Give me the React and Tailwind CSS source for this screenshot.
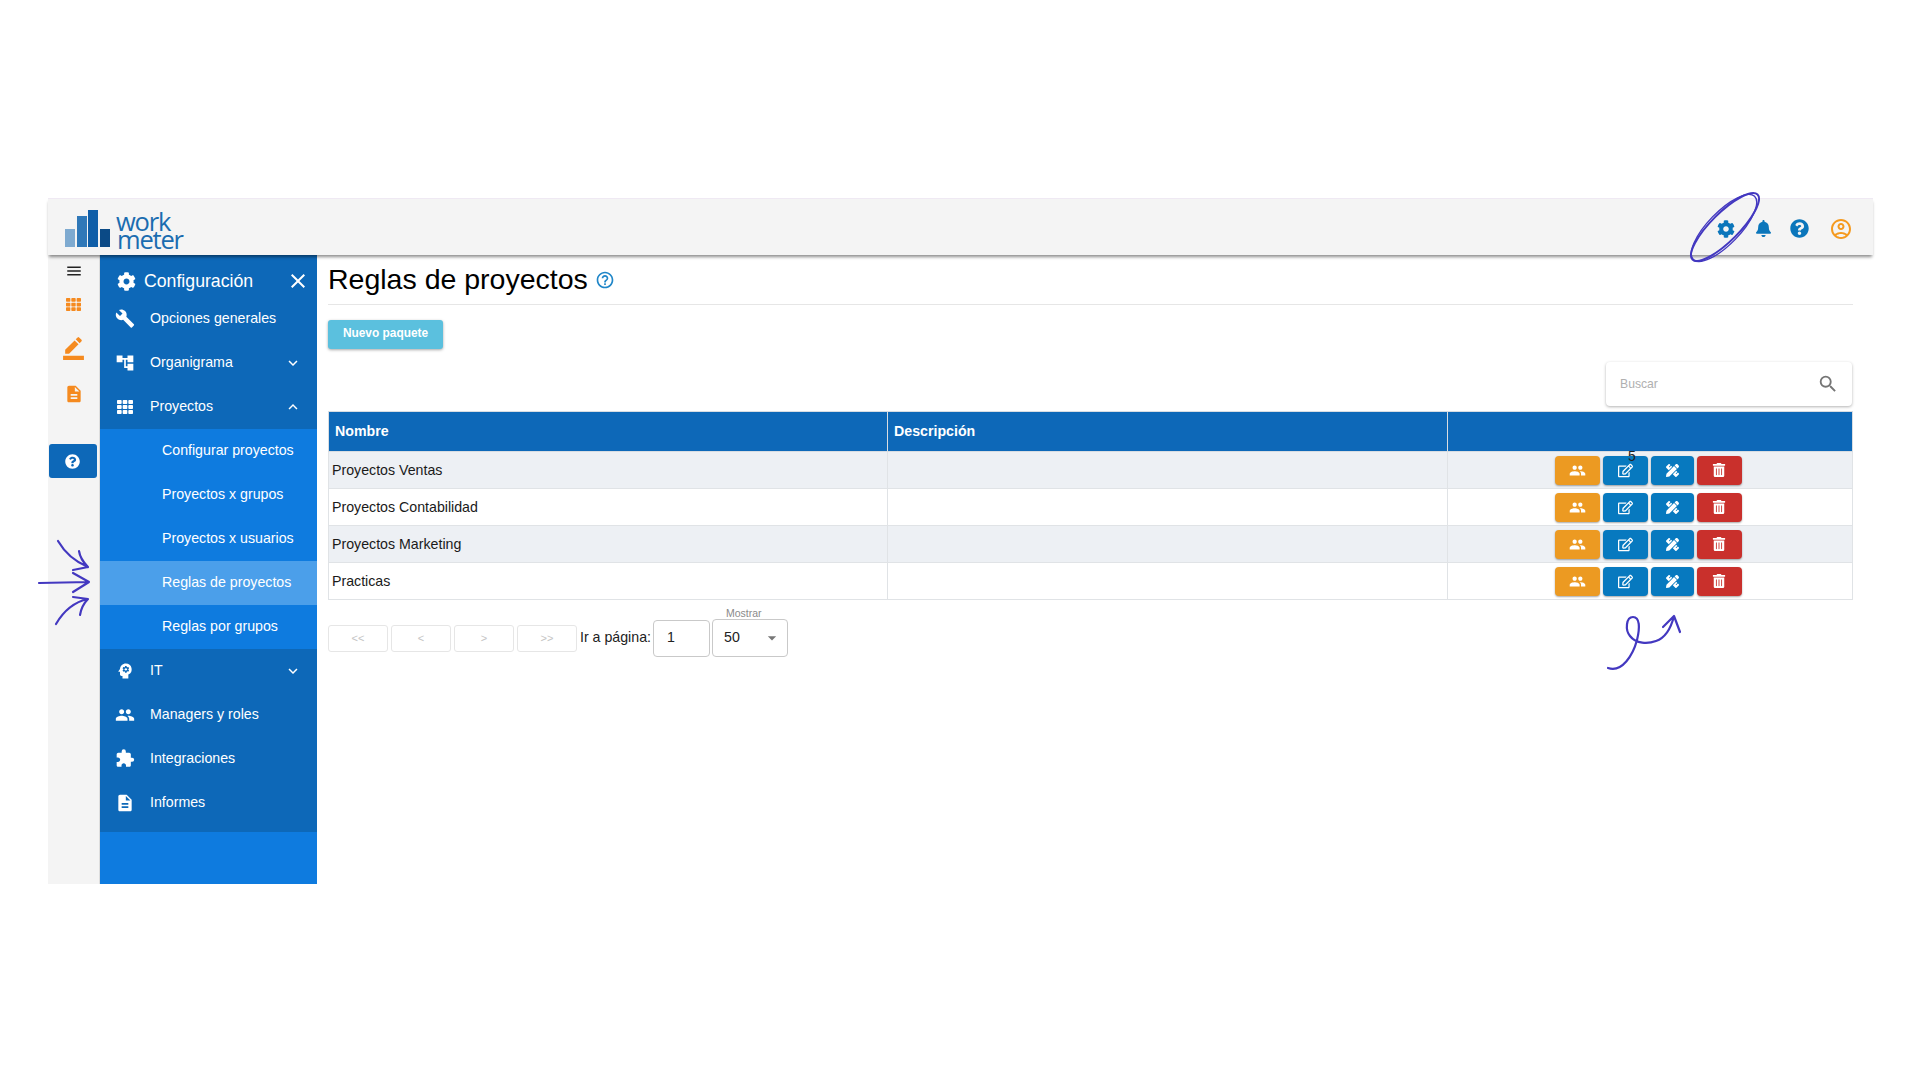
import React from "react";
import { FaCog, FaTh, FaRegEdit, FaQuestionCircle, FaPencilRuler, FaTrashAlt, FaBell } from "react-icons/fa";
import { MdBuild, MdAccountTree, MdPsychology, MdPeople, MdDescription, MdMenu, MdBorderColor, MdClose, MdKeyboardArrowDown, MdKeyboardArrowUp, MdSearch, MdHelpOutline, MdOutlineAccountCircle, MdArrowDropDown, MdExtension } from "react-icons/md";

function MenuRow({ icon, label, arrow }) {
  return (
    <div className="h-[44px] flex items-center pl-[15px] pr-[15px] text-white text-[14.2px]">
      <span className="w-[20px] h-[20px] flex items-center justify-center text-[20px] mr-[15px]">{icon}</span>
      <span className="flex-1">{label}</span>
      {arrow === "down" && <MdKeyboardArrowDown className="text-[18px]" />}
      {arrow === "up" && <MdKeyboardArrowUp className="text-[18px]" />}
    </div>
  );
}

function SubRow({ label, active }) {
  return (
    <div className={"h-[44px] flex items-center pl-[62px] text-white text-[14.2px] " + (active ? "bg-[#4b9fea]" : "")}>
      {label}
    </div>
  );
}

function ActionButtons() {
  const b = "h-[29px] rounded-[4px] flex items-center justify-center text-white shadow-[0_1px_2px_rgba(0,0,0,0.35)]";
  return (
    <div className="flex justify-center gap-[3px] pr-[4px]">
      <div className={b + " w-[45px] bg-[#ec9a22]"}><MdPeople className="text-[17px]" /></div>
      <div className={b + " w-[45px] bg-[#0779bf]"}><FaRegEdit className="text-[15px]" /></div>
      <div className={b + " w-[43px] bg-[#0779bf]"}><FaPencilRuler className="text-[13px]" /></div>
      <div className={b + " w-[45px] bg-[#c9302c]"}><FaTrashAlt className="text-[14px]" /></div>
    </div>
  );
}

function PageButton({ label }) {
  return (
    <div className="w-[60px] h-[27px] mr-[3px] border border-[#e6e6e6] rounded-[3px] flex items-center justify-center text-[11px] text-[#c4c4c4]">
      {label}
    </div>
  );
}

const rows = ["Proyectos Ventas", "Proyectos Contabilidad", "Proyectos Marketing", "Practicas"];

export default function App() {
  return (
    <div className="relative min-h-screen bg-white pt-[198px] pl-[48px] pr-[47px] overflow-hidden font-['Liberation_Sans',Arial,sans-serif]">
      <header className="relative z-10 h-[57px] bg-[#f4f4f4] border-t border-[#efe9f3] shadow-[0_3px_3px_-1px_rgba(0,0,0,0.45)] flex items-center justify-between pr-[20px]">
        <div className="flex items-end ml-[17px] mt-[4px]">
          <svg width="46" height="37" viewBox="0 0 46 37" className="mr-[5px] mb-[2px]">
            <rect x="0" y="19" width="10" height="18" fill="#7eaad0" />
            <rect x="12" y="6" width="10" height="31" fill="#2f78b8" />
            <rect x="23" y="0" width="10" height="37" fill="#0f5ea8" />
            <rect x="35" y="19" width="10" height="18" fill="#0b4a86" />
          </svg>
          <div className="font-['Open_Sans',sans-serif] font-normal text-[#1a6cb0] text-[25.5px] leading-[18px] tracking-[-1.2px] mb-[1px]">
            <div>work</div>
            <div className="ml-[1px]">meter</div>
          </div>
        </div>
        <div className="flex items-center mt-[3px]">
          <FaCog className="text-[18px] text-[#0b76bb]" />
          <FaBell className="text-[17px] text-[#0b76bb] ml-[20px]" />
          <FaQuestionCircle className="text-[19px] text-[#0b76bb] ml-[18px]" />
          <MdOutlineAccountCircle className="text-[24px] text-[#f59a1f] ml-[20px]" />
        </div>
      </header>

      <div className="flex h-[629px]">
        <aside className="w-[52px] bg-[#f4f4f4] flex flex-col items-center shrink-0 border-r border-[#dddddd]">
          <MdMenu className="text-[18px] text-[#222222] mt-[7px]" />
          <FaTh className="text-[15px] text-[#f58a1f] mt-[17px]" />
          <MdBorderColor className="text-[25px] text-[#f58a1f] mt-[23px]" />
          <MdDescription className="text-[20px] text-[#f58a1f] mt-[24px]" />
          <div className="w-[48px] h-[34px] mt-[40px] self-start ml-[1px] pr-[1px] rounded-[3px] bg-[#0d68b8] flex items-center justify-center">
            <FaQuestionCircle className="text-[15px] text-white" />
          </div>
        </aside>

        <nav className="w-[217px] bg-[#0e7bdf] shrink-0 flex flex-col">
          <div className="bg-[#0d68b8]">
            <div className="h-[41.5px] flex items-center pl-[17px] pr-[7px] pt-[11px] text-white">
              <FaCog className="text-[19px] mr-[8px]" />
              <span className="flex-1 text-[17.7px]">Configuración</span>
              <MdClose className="text-[24px]" />
            </div>
            <MenuRow icon={<MdBuild className="text-[23px]" />} label="Opciones generales" />
            <MenuRow icon={<MdAccountTree />} label="Organigrama" arrow="down" />
            <MenuRow icon={<FaTh className="text-[16px]" />} label="Proyectos" arrow="up" />
          </div>
          <div>
            <SubRow label="Configurar proyectos" />
            <SubRow label="Proyectos x grupos" />
            <SubRow label="Proyectos x usuarios" />
            <SubRow label="Reglas de proyectos" active />
            <SubRow label="Reglas por grupos" />
          </div>
          <div className="bg-[#0d68b8] pb-[7.5px]">
            <MenuRow icon={<MdPsychology />} label="IT" arrow="down" />
            <MenuRow icon={<MdPeople className="text-[24px]" />} label="Managers y roles" />
            <MenuRow icon={<MdExtension className="text-[23px]" />} label="Integraciones" />
            <MenuRow icon={<MdDescription />} label="Informes" />
          </div>
        </nav>

        <main className="flex-1 min-w-0 pl-[11px] pr-[20px]">
          <div className="h-[50px] border-b border-[#e6e6e6] flex items-center text-[28.5px] text-black">
            <span>Reglas de proyectos</span>
            <MdHelpOutline className="text-[20px] text-[#1f86c8] ml-[7px]" />
          </div>
          <div className="mt-[15px] w-[115px] h-[29px] pb-[2px] rounded-[3px] bg-[#5bc0de] shadow-[0_1px_3px_rgba(0,0,0,0.35)] flex items-center justify-center text-white text-[11.9px] font-bold">
            Nuevo paquete
          </div>
          <div className="mt-[13px] ml-auto mr-[1px] w-[246px] h-[44px] rounded-[4px] bg-white shadow-[0_1px_3px_rgba(0,0,0,0.3)] flex items-center justify-between pl-[14px] pr-[13px] text-[12.2px] text-[#b0b0b0]">
            <span>Buscar</span>
            <MdSearch className="text-[22px] text-[#757575]" />
          </div>
          <table className="relative mt-[5px] w-full table-fixed border-collapse text-[14.2px] text-[#1a1a1a]">
            <thead>
              <tr className="h-[40px] bg-[#0d68b8] text-white">
                <th className="w-[559px] text-left font-bold pl-[6px] border border-[#d8dde2]">Nombre</th>
                <th className="w-[560px] text-left font-bold pl-[6px] border border-[#d8dde2]">Descripción</th>
                <th className="border border-[#d8dde2]"></th>
              </tr>
            </thead>
            <tbody>
              {rows.map((r, i) => (
                <tr key={r} className={"h-[37px] " + (i % 2 === 0 ? "bg-[#edf0f4]" : "bg-white")}>
                  <td className="pl-[3px] pt-[2px] border border-[#e0e3e6]">{r}</td>
                  <td className="border border-[#e0e3e6]"></td>
                  <td className="border border-[#e0e3e6]"><ActionButtons /></td>
                </tr>
              ))}
            </tbody>
          </table>
          <div className="relative">
            <div className="absolute left-[1300px] top-[-154px] text-[14px] text-[#222222] z-10">5</div>
          </div>
          <div className="mt-[19px] flex items-center">
            <PageButton label="<<" />
            <PageButton label="<" />
            <PageButton label=">" />
            <PageButton label=">>" />
            <span className="text-[14.2px] text-[#222222]">Ir a página:</span>
            <div className="relative ml-[2px] w-[57px] h-[37px] border border-[#c9c9c9] rounded-[4px] flex items-center pl-[13px] text-[14.2px] text-[#222222]">1</div>
            <div className="relative ml-[2px] w-[76px] h-[38px] border border-[#c9c9c9] rounded-[4px] flex items-center justify-between pl-[11px] pr-[5px] text-[14.2px] text-[#222222]">
              <span className="absolute left-[10px] top-[-13px] px-[3px] bg-white text-[10.5px] leading-[12px] text-[#8a8a8a]">Mostrar</span>
              <span>50</span>
              <MdArrowDropDown className="text-[20px] text-[#777777]" />
            </div>
          </div>
        </main>
      </div>

      <svg className="absolute left-0 top-0 z-20 pointer-events-none" width="1920" height="1080" viewBox="0 0 1920 1080" fill="none" stroke="#4338c0" strokeLinecap="round" strokeLinejoin="round">
        <ellipse cx="1725" cy="227" rx="46" ry="14" transform="rotate(-45 1725 227)" strokeWidth="2" />
        <ellipse cx="1724" cy="228" rx="44" ry="16" transform="rotate(-46 1724 228)" strokeWidth="1.4" />
        <path d="M58 541 C65 553 76 562 88 567 M79 551 C80 558 84 563 88 567 L73 570" strokeWidth="2.2" />
        <path d="M39 583 L89 582 M73 573 L89 582 L73 592" strokeWidth="2.2" />
        <path d="M56 624 C63 612 74 602 88 599 M73 597 L88 599 C83 604 81 609 80 615" strokeWidth="2.2" />
        <path d="M1608 668 C1622 673 1633 655 1637 640 C1640 628 1640 617 1633 617 C1626 617 1625 630 1630 636 C1636 644 1648 644 1656 641 C1665 638 1671 628 1674 616 M1663 627 L1674 616 L1680 632" strokeWidth="2.2" />
      </svg>
    </div>
  );
}
